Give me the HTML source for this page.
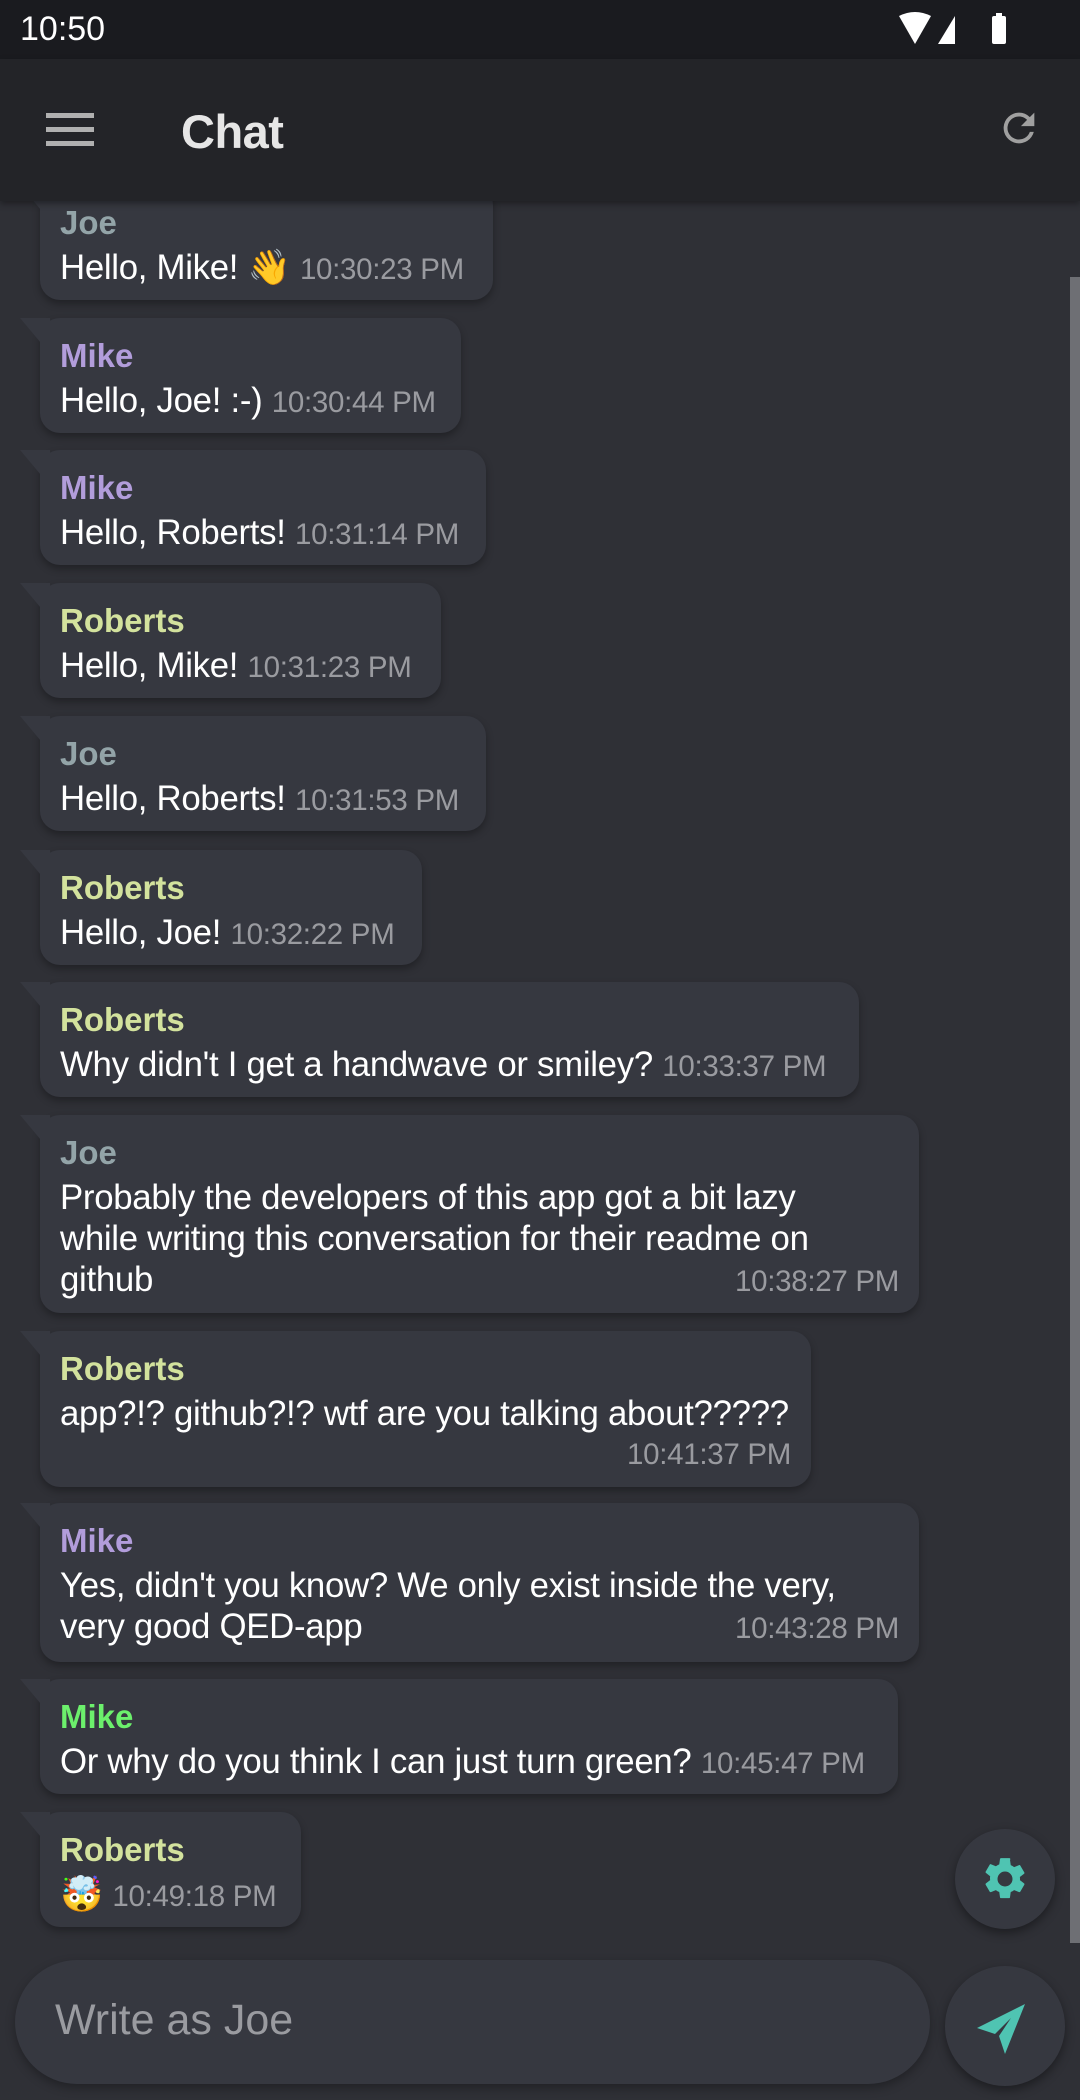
<!DOCTYPE html>
<html><head><meta charset="utf-8"><style>
*{margin:0;padding:0;box-sizing:border-box}
body{width:1080px;height:2100px;background:#2f3036;position:relative;overflow:hidden;font-family:"Liberation Sans","Noto Sans CJK SC",sans-serif;}
.status{position:absolute;left:0;top:0;width:1080px;height:59px;background:#1a1b1f;color:#fff;font-size:34px;}
.status .t{position:absolute;left:20px;top:10px;}
.appbar{position:absolute;left:0;top:59px;width:1080px;height:142px;background:#232428;box-shadow:0 3px 6px rgba(0,0,0,.35);z-index:5}
.appbar .title{position:absolute;left:181px;top:45px;font-size:47px;color:#e6e6e6;font-weight:bold;letter-spacing:-0.5px}
.b{position:absolute;left:40px;background:#363840;border-radius:20px;padding:14px 20px 0 20px;box-shadow:0 4px 8px rgba(0,0,0,.3);white-space:nowrap;}
.b:before{content:"";position:absolute;left:-20px;top:0;width:30px;height:24px;background:#363840;clip-path:polygon(0 0,100% 0,100% 100%,67% 100%);}
.n{font-size:33px;font-weight:bold;line-height:48px;}
.x{font-size:34.8px;color:#fff;line-height:41px;letter-spacing:-0.3px}
.tm{font-size:29.5px;color:#9a9ba0;letter-spacing:-0.3px}
.row{display:flex;justify-content:space-between;align-items:baseline}
.joe{color:#93a4a8}.mike{color:#b29ddb}.rob{color:#d3e29d}.green{color:#6cf06c}
.scroll{position:absolute;left:1070px;top:277px;width:10px;height:1666px;background:#6e6f74}
.fab{position:absolute;border-radius:50%;background:#363840;box-shadow:0 4px 10px rgba(0,0,0,.4)}
.input{position:absolute;left:15px;top:1960px;width:915px;height:124px;border-radius:62px;background:#363840;box-shadow:0 4px 10px rgba(0,0,0,.3)}
.input span{position:absolute;left:40px;top:36px;font-size:43px;color:#9a9ba0}
</style></head><body>
<div class="status"><span class="t">10:50</span>
<svg style="position:absolute;left:895px;top:12px" width="120" height="34" viewBox="0 0 120 34">
<path d="M4 4 Q20 -4 36 4 L20 32 Z" fill="#fff"/>
<path d="M60 4 L60 32 L43 32 Z" fill="#fff"/>
<rect x="97" y="4" width="14" height="28" rx="2" fill="#fff"/><rect x="101" y="1" width="6" height="4" fill="#fff"/>
</svg></div>
<div class="appbar">
<svg style="position:absolute;left:46px;top:54px" width="48" height="34"><rect y="0" width="48" height="5" fill="#b0b0b0"/><rect y="14" width="48" height="5" fill="#b0b0b0"/><rect y="28" width="48" height="5" fill="#b0b0b0"/></svg>
<div class="title">Chat</div>
<svg style="position:absolute;left:996px;top:46px" width="46" height="46" viewBox="0 0 24 24"><path fill="#a0a0a0" d="M17.65 6.35A7.96 7.96 0 0 0 12 4a8 8 0 1 0 7.73 10h-2.08A6 6 0 1 1 12 6c1.66 0 3.14.69 4.22 1.78L13 11h7V4l-2.35 2.35z"/></svg>
</div>

<div class="b" style="top:185px;width:453px;height:115px"><div class="n joe">Joe</div><div class="x">Hello, Mike! 👋 <span class="tm">10:30:23 PM</span></div></div>
<div class="b" style="top:318px;width:421px;height:115px"><div class="n mike">Mike</div><div class="x">Hello, Joe! :-) <span class="tm">10:30:44 PM</span></div></div>
<div class="b" style="top:450px;width:446px;height:115px"><div class="n mike">Mike</div><div class="x">Hello, Roberts! <span class="tm">10:31:14 PM</span></div></div>
<div class="b" style="top:583px;width:401px;height:115px"><div class="n rob">Roberts</div><div class="x">Hello, Mike! <span class="tm">10:31:23 PM</span></div></div>
<div class="b" style="top:716px;width:446px;height:115px"><div class="n joe">Joe</div><div class="x">Hello, Roberts! <span class="tm">10:31:53 PM</span></div></div>
<div class="b" style="top:850px;width:382px;height:115px"><div class="n rob">Roberts</div><div class="x">Hello, Joe! <span class="tm">10:32:22 PM</span></div></div>
<div class="b" style="top:982px;width:819px;height:115px"><div class="n rob">Roberts</div><div class="x">Why didn't I get a handwave or smiley? <span class="tm">10:33:37 PM</span></div></div>
<div class="b" style="top:1115px;width:879px;height:198px"><div class="n joe">Joe</div><div class="x">Probably the developers of this app got a bit lazy<br>while writing this conversation for their readme on</div><div class="x row"><span>github</span><span class="tm">10:38:27 PM</span></div></div>
<div class="b" style="top:1331px;width:771px;height:156px"><div class="n rob">Roberts</div><div class="x">app?!? github?!? wtf are you talking about?????</div><div class="x" style="text-align:right;line-height:38px"><span class="tm">10:41:37 PM</span></div></div>
<div class="b" style="top:1503px;width:879px;height:159px"><div class="n mike">Mike</div><div class="x">Yes, didn't you know? We only exist inside the very,</div><div class="x row"><span>very good QED-app</span><span class="tm">10:43:28 PM</span></div></div>
<div class="b" style="top:1679px;width:858px;height:115px"><div class="n green">Mike</div><div class="x">Or why do you think I can just turn green? <span class="tm">10:45:47 PM</span></div></div>
<div class="b" style="top:1812px;width:261px;height:115px"><div class="n rob">Roberts</div><div class="x">🤯 <span class="tm">10:49:18 PM</span></div></div>

<div class="scroll"></div>
<div class="fab" style="left:955px;top:1829px;width:100px;height:100px">
<svg style="position:absolute;left:25px;top:25px" width="50" height="50" viewBox="0 0 24 24"><path fill="#4fc4b2" d="M19.14 12.94c.04-.3.06-.61.06-.94s-.02-.64-.07-.94l2.030-1.580a.49.49 0 0 0 .12-.61l-1.92-3.32a.49.49 0 0 0-.59-.22l-2.39.96a7 7 0 0 0-1.62-.94l-.36-2.54A.48.48 0 0 0 13.92 2h-3.84a.48.48 0 0 0-.48.41l-.36 2.54c-.59.24-1.130.56-1.62.94l-2.39-.96a.48.48 0 0 0-.59.22L2.72 8.47a.48.48 0 0 0 .12.61l2.03 1.58c-.05.3-.07.63-.07.94s.02.64.07.94l-2.03 1.58a.49.49 0 0 0-.12.61l1.92 3.32c.12.22.37.29.59.22l2.39-.96c.5.38 1.03.7 1.62.94l.36 2.54c.05.24.24.41.48.41h3.840c.24 0 .44-.17.47-.41l.36-2.54c.59-.24 1.13-.56 1.62-.94l2.39.96c.22.08.47 0 .59-.22l1.92-3.32a.48.48 0 0 0-.12-.61l-2.01-1.58zM12 15.6A3.6 3.6 0 1 1 12 8.4a3.6 3.6 0 0 1 0 7.2z"/></svg></div>
<div class="input"><span>Write as Joe</span></div>
<div class="fab" style="left:945px;top:1966px;width:120px;height:120px">
<svg style="position:absolute;left:32px;top:38px" width="50" height="50" viewBox="0 0 50 50"><path fill="#4fc4b2" d="M48 0 L0 24 L18 30 L34 14 L22 32 L28 50 Z"/></svg></div>
</body></html>
